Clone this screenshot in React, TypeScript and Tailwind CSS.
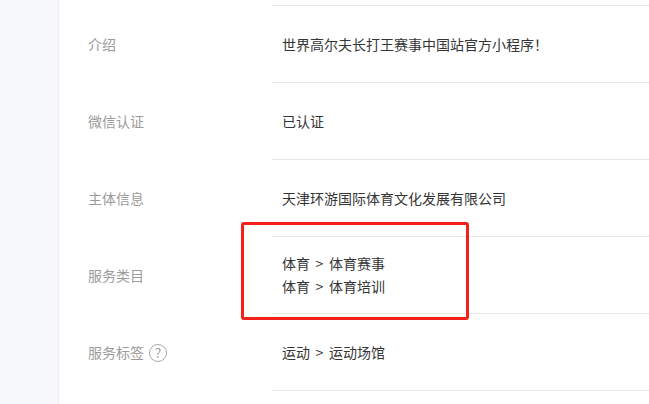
import React from "react";

const font = { fontFamily: '"Noto Sans CJK SC", "Noto Sans", sans-serif' };

function Row({ label, children, help }: { label: string; children: React.ReactNode; help?: boolean }) {
  return (
    <div className="flex h-[77px]">
      <div className="w-[213px] shrink-0 pl-[29px] flex items-center text-[14px] text-[#9b9b9b]">
        <span>{label}</span>
        {help && (
          <span className="ml-[5px] w-[18px] h-[18px] rounded-full border border-[#a8a8a8] flex items-center justify-center text-[13px] leading-none text-[#9b9b9b]">
            ?
          </span>
        )}
      </div>
      <div className="flex-1 border-b border-[#e8e8e8] pl-[10px] flex flex-col justify-center text-[14px] text-[#353535]">
        {children}
      </div>
    </div>
  );
}

function Path({ a, b }: { a: string; b: string }) {
  return (
    <div className="leading-[23px] flex items-center">
      <span>{a}</span>
      <span className="inline-block w-[19px] text-center">&gt;</span>
      <span>{b}</span>
    </div>
  );
}

export default function App() {
  return (
    <div className="relative w-[649px] h-[404px] overflow-hidden bg-white flex" style={font}>
      <div className="w-[59px] shrink-0 bg-[#f7f8fa] border-r border-[#eceef1]" />
      <div className="flex-1 flex flex-col">
        <div className="flex h-[6px]">
          <div className="w-[213px] shrink-0" />
          <div className="flex-1 border-b border-[#e8e8e8]" />
        </div>
        <Row label="介绍">世界高尔夫长打王赛事中国站官方小程序！</Row>
        <Row label="微信认证">已认证</Row>
        <Row label="主体信息">天津环游国际体育文化发展有限公司</Row>
        <Row label="服务类目">
          <Path a="体育" b="体育赛事" />
          <Path a="体育" b="体育培训" />
        </Row>
        <Row label="服务标签" help>
          <Path a="运动" b="运动场馆" />
        </Row>
      </div>
      <div className="absolute left-[241px] top-[222px] w-[228px] h-[98px] border-[3px] border-[#f4201a] rounded-[3px]" />
    </div>
  );
}
